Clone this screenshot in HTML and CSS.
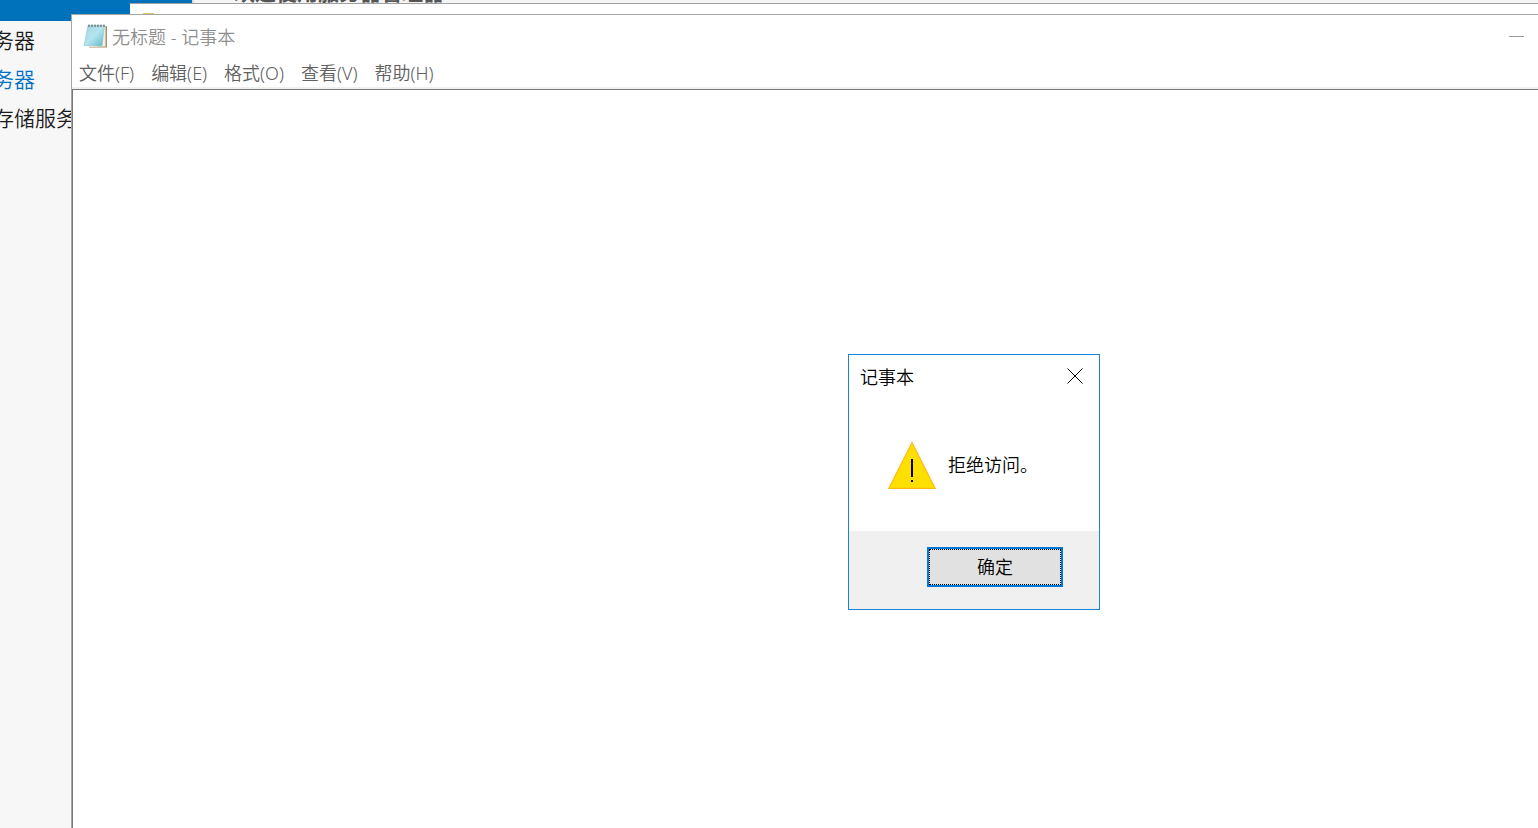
FILE: index.html
```
<!DOCTYPE html>
<html lang="zh-CN">
<head>
<meta charset="utf-8">
<title>无标题 - 记事本</title>
<link rel="stylesheet" href="styles.css">
</head>

<body>
<div class="desktop">
    <div class="manager">
        <div class="side">
            <div class="side_top"></div>
            <ul class="side_nav">
                <li><a href="#">务器</a></li>
                <li><a href="#" class="active">务器</a></li>
                <li><a href="#">存储服务</a></li>
            </ul>
        </div>
        <div class="welcome"><h2>欢迎使用服务器管理器</h2></div>
    </div>

    <div class="back_win"><span class="back_icon"></span></div>

    <div class="notepad">
        <div class="title_bar">
            <svg class="note_icon" width="26" height="26" viewBox="0 0 26 26">
                <defs>
                    <linearGradient id="paper" x1="0" y1="0" x2="1" y2="1">
                        <stop offset="0" stop-color="#a5d5df"/>
                        <stop offset="0.5" stop-color="#b4e5ee"/>
                        <stop offset="1" stop-color="#5eb6c9"/>
                    </linearGradient>
                </defs>
                <path d="M7 3H24V24.500H6z" fill="#a5936b"/>
                <path d="M6 3H22.500V23.500L5 24z" fill="#f5f1e2"/>
                <path d="M5 2.500H21.500L19 23L1 22.500z" fill="url(#paper)" stroke="#8fc4ce" stroke-width="0.600"/>
                <path d="M6 1.500v2.500M9 1.500v2.500M12 1.500v2.500M15 1.500v2.500M18 1.500v2.500M21 1.500v2.500" stroke="#5d6b70" stroke-width="1.200"/>
            </svg>
            <h1>无标题 - 记事本</h1>
            <button class="min_btn" type="button" aria-label="最小化"><span></span></button>
        </div>
        <div class="menu_bar">
            <button type="button">文件(F)</button>
            <button type="button">编辑(E)</button>
            <button type="button">格式(O)</button>
            <button type="button">查看(V)</button>
            <button type="button">帮助(H)</button>
        </div>
        <textarea class="editor" aria-label="文本编辑区"></textarea>
    </div>

    <div class="dialog" role="alertdialog" aria-labelledby="dlg_title" aria-describedby="dlg_msg">
        <div class="dlg_head">
            <h2 id="dlg_title">记事本</h2>
            <button class="close_btn" type="button" aria-label="关闭">
                <svg width="16" height="16" viewBox="0 0 16 16"><path d="M0.500 0.500L15.500 15.500M15.500 0.500L0.500 15.500" stroke="#000" stroke-width="1"/></svg>
            </button>
        </div>
        <div class="dlg_body">
            <svg width="48" height="48" viewBox="0 0 48 48">
                <path d="M24 1.500L47.200 47.400H0.800z" fill="#fde000" stroke="#ffb917" stroke-width="1.200"/>
                <path d="M23 18h2v18h-2zM23 39h2v2h-2z" fill="#000"/>
            </svg>
            <p id="dlg_msg">拒绝访问。</p>
        </div>
        <div class="dlg_foot">
            <button class="ok_btn" type="button"><span>确定</span></button>
        </div>
    </div>
</div>
</body>
</html>
```

FILE: styles.css
```
*{margin:0;padding:0;box-sizing:border-box;}
body{font-family:"Noto Sans","Noto Sans CJK SC",sans-serif;font-size:18px;font-weight:350;background:#fff;}
button{border:none;background:none;font:inherit;color:inherit;}
svg{display:block;}
.desktop{position:relative;height:100vh;overflow:hidden;}

/* 服务器管理器 */
.manager{position:absolute;left:-7px;top:0;right:0;bottom:0;display:flex;background:#f7f7f7;}
.side{width:199px;}
.side_top{height:21px;background:#0072bc;}
.side_nav{list-style:none;}
.side_nav a{display:block;height:39px;line-height:37px;font-family:"Noto Sans CJK SC",sans-serif;font-size:21px;color:#1c1c1c;text-decoration:none;white-space:nowrap;}
.side_nav .active{color:#0072c6;}
.welcome{flex:1;height:3px;padding-left:40px;display:flex;align-items:flex-end;border-left:2px solid #ddd;background:#f5f5f5;}
.welcome h2{font-family:"Noto Sans CJK SC",sans-serif;font-size:21px;line-height:24px;color:#555;}

.back_win{position:absolute;left:130px;top:3px;right:0;height:40px;border-top:1px solid #a0a0a0;background:#fff;}
.back_icon{display:block;width:11px;height:8px;margin:9px 0 0 13px;background:#e3c06c;}

/* 记事本 */
.notepad{position:absolute;left:71px;top:14px;right:0;bottom:0;display:flex;flex-direction:column;border-top:1px solid #a6a6a6;border-left:1px solid #a6a6a6;background:#fff;}
.title_bar{display:flex;align-items:center;height:42px;padding:0 14px 0 11px;}
.title_bar h1{flex:1;margin-left:3px;font-size:18px;font-weight:inherit;color:#909090;}
.min_btn{width:15px;height:20px;}
.min_btn span{display:block;height:1px;background:#999;}
.menu_bar{display:flex;gap:17px;height:32px;padding:0 7px;border-bottom:2px solid #f0f0f0;color:#606060;}
.editor{flex:1;width:100%;padding:2px 4px;border:none;border-top:1px solid #787878;border-left:1px solid #787878;outline:none;resize:none;background:#fff;font:inherit;}

/* 提示框 */
.dialog{position:absolute;left:848px;top:354px;width:252px;border:1px solid #1883d7;background:#fff;color:#000;}
.dlg_head{display:flex;align-items:center;justify-content:space-between;height:42px;padding:0 16px 0 11px;}
.dlg_head h2{font-size:18px;font-weight:inherit;}
.dlg_body{display:flex;align-items:center;gap:12px;height:134px;padding:2px 39px 0;}
.dlg_body p{padding-bottom:2px;white-space:nowrap;}
.dlg_foot{display:flex;justify-content:flex-end;height:78px;padding:16px 36px 22px;background:#f0f0f0;}
.ok_btn{width:136px;height:40px;border:2px solid #0078d7;background:#e1e1e1;}
.ok_btn span{display:flex;align-items:center;justify-content:center;height:100%;padding-bottom:2px;border:1px dotted #000;}
```
